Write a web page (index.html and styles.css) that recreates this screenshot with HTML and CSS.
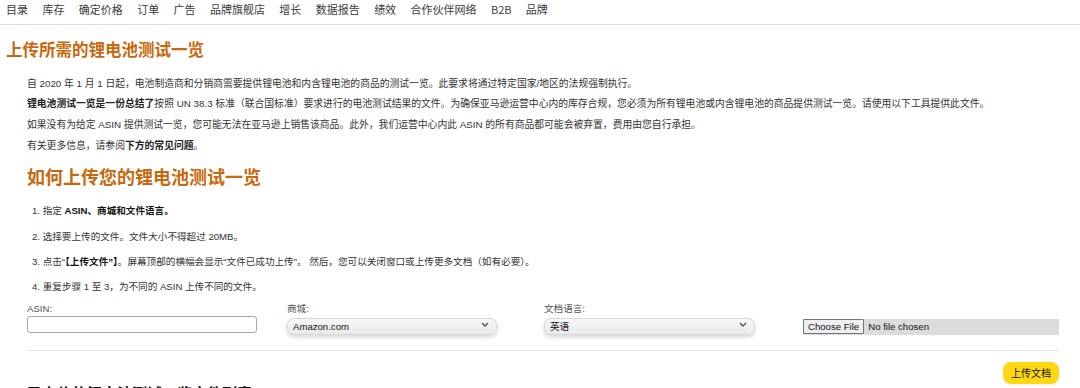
FILE: index.html
```html
<!DOCTYPE html>
<html lang="zh-CN">
<head>
<meta charset="utf-8">
<title>上传所需的锂电池测试一览</title>
<link rel="stylesheet" href="styles.css">
</head>
<body>
<nav class="topnav">
  <a>目录</a><a>库存</a><a>确定价格</a><a>订单</a><a>广告</a><a>品牌旗舰店</a><a>增长</a><a>数据报告</a><a>绩效</a><a>合作伙伴网络</a><a>B2B</a><a>品牌</a>
</nav>
<h1 class="page-title">上传所需的锂电池测试一览</h1>
<main class="content">
  <section class="intro">
    <p>自 2020 年 1 月 1 日起，电池制造商和分销商需要提供锂电池和内含锂电池的商品的测试一览。此要求将通过特定国家/地区的法规强制执行。</p>
    <p><b>锂电池测试一览是一份总结了</b>按照 UN 38.3 标准（联合国标准）要求进行的电池测试结果的文件。为确保亚马逊运营中心内的库存合规，您必须为所有锂电池或内含锂电池的商品提供测试一览。请使用以下工具提供此文件。</p>
    <p>如果没有为给定 ASIN 提供测试一览，您可能无法在亚马逊上销售该商品。此外，我们运营中心内此 ASIN 的所有商品都可能会被弃置，费用由您自行承担。</p>
    <p>有关更多信息，请参阅<b>下方的常见问题</b>。</p>
  </section>
  <h2 class="section-title">如何上传您的锂电池测试一览</h2>
  <ol class="steps">
    <li>1. 指定 <b>ASIN、商城和文件语言。</b></li>
    <li>2. 选择要上传的文件。文件大小不得超过 20MB。</li>
    <li>3. 点击“<b>【上传文件”】</b>。屏幕顶部的横幅会显示“文件已成功上传”。 然后，您可以关闭窗口或上传更多文档（如有必要）。</li>
    <li>4. 重复步骤 1 至 3，为不同的 ASIN 上传不同的文件。</li>
  </ol>
  <form class="upload-form">
    <div class="field">
      <label class="field-label">ASIN:</label>
      <input class="text-input" type="text">
    </div>
    <div class="field field-pad">
      <label class="field-label">商城:</label>
      <div class="select-wrap">
        <select class="select"><option>Amazon.com</option></select>
        <svg class="chevron" width="8" height="5" viewBox="0 0 8 5"><path d="M1 1 L4 4 L7 1" fill="none" stroke="#555" stroke-width="1.4"/></svg>
      </div>
    </div>
    <div class="field field-pad2">
      <label class="field-label">文档语言:</label>
      <div class="select-wrap wide">
        <select class="select"><option>英语</option></select>
        <svg class="chevron" width="8" height="5" viewBox="0 0 8 5"><path d="M1 1 L4 4 L7 1" fill="none" stroke="#555" stroke-width="1.4"/></svg>
      </div>
    </div>
    <div class="field field-pad file-field">
      <div class="file-input"><span class="file-btn">Choose File</span><span class="file-name">No file chosen</span></div>
    </div>
  </form>
  <hr class="divider">
  <div class="actions"><button class="upload-btn" type="button">上传文档</button></div>
  <h3 class="list-title">已上传的锂电池测试一览文件列表</h3>
</main>
</body>
</html>
```
FILE: styles.css
```css
* { box-sizing: border-box; }
html, body { margin: 0; padding: 0; background: #fff; overflow: hidden; }
body {
  font-family: "Liberation Sans", "Noto Sans CJK SC", sans-serif;
  color: #333;
  width: 1080px;
  height: 388px;
}
.topnav {
  display: flex;
  gap: 14.4px;
  padding-left: 6px;
  height: 25px;
  align-items: center;
  padding-bottom: 6px;
  border-bottom: 1px solid #dedede;
  font-family: "Noto Sans CJK SC", "Noto Sans", sans-serif;
  font-size: 11px;
  color: #3a3a3a;
}
.topnav a { white-space: nowrap; line-height: 14px; }
.page-title {
  margin: 13px 0 0 6px;
  font-family: "Noto Sans CJK SC", sans-serif;
  font-size: 16.5px;
  line-height: 22px;
  font-weight: 700;
  color: #c9680d;
}
.content { padding: 0 21px 0 27px; }
.intro { margin-top: 13.6px; }
.intro p {
  margin: 0;
  font-size: 9.8px;
  line-height: 20.7px;
  color: #333;
  white-space: nowrap;
}
.intro b { font-weight: 700; color: #222; }
.section-title {
  margin: 8px 0 0 0;
  font-family: "Noto Sans CJK SC", sans-serif;
  font-size: 18px;
  line-height: 24px;
  font-weight: 700;
  color: #c9680d;
}
.steps {
  list-style: none;
  margin: 9.8px 0 0 0;
  padding: 0 0 0 5px;
}
.steps li {
  font-size: 9.6px;
  line-height: 25.4px;
  color: #333;
  white-space: nowrap;
}
.steps b { color: #111; }
.upload-form {
  display: grid;
  grid-template-columns: repeat(4, 1fr);
  margin-top: 2px;
}
.field { display: flex; flex-direction: column; }
.field-pad { padding-left: 2px; }
.field-pad2 { padding-left: 1px; }
.field-label {
  font-size: 9.6px;
  line-height: 14px;
  color: #555;
  height: 14px;
}
.text-input {
  width: 230px;
  height: 17px;
  border: 1px solid #a9a9a9;
  border-radius: 3px;
  background: #fff;
}
.select-wrap { position: relative; width: 210px; }
.select-wrap.wide { width: 211px; }
.select {
  appearance: none;
  -webkit-appearance: none;
  width: 100%;
  height: 17px;
  margin: 0;
  padding: 0 0 0 5px;
  font-family: "Liberation Sans", "Noto Sans CJK SC", sans-serif;
  font-size: 9.6px;
  color: #0f1111;
  background: linear-gradient(#f7f8f8, #e7e9ec);
  border: 1px solid #d5d9d9;
  border-radius: 7px;
  box-shadow: 0 2px 4px rgba(15, 17, 17, 0.18);
}
.chevron { position: absolute; right: 8px; top: 6px; }
.file-field { justify-content: flex-end; }
.file-input {
  display: flex;
  align-items: center;
  height: 16px;
  background: #dcdcdc;
  font-size: 9.6px;
  color: #111;
}
.file-btn {
  height: 15px;
  padding: 0 4px;
  line-height: 13px;
  background: #efefef;
  border: 1px solid #767676;
  border-radius: 1px;
  white-space: nowrap;
}
.file-name { padding-left: 4px; white-space: nowrap; }
.divider {
  margin: 15px 0 0 0;
  border: 0;
  border-top: 1px solid #e4e4e4;
  height: 0;
}
.actions { display: flex; justify-content: flex-end; margin-top: 11px; }
.upload-btn {
  width: 56px;
  height: 22px;
  padding: 0;
  border: 0;
  border-radius: 8px;
  background: #ffd814;
  font-family: "Noto Sans CJK SC", sans-serif;
  font-size: 10px;
  color: #0f1111;
  box-shadow: 0 1px 2px rgba(213, 217, 217, 0.5);
}
.list-title {
  margin: 2px 0 0 0;
  font-family: "Noto Sans CJK SC", sans-serif;
  font-size: 15px;
  line-height: 14px;
  font-weight: 700;
  color: #111;
  white-space: nowrap;
}
```
